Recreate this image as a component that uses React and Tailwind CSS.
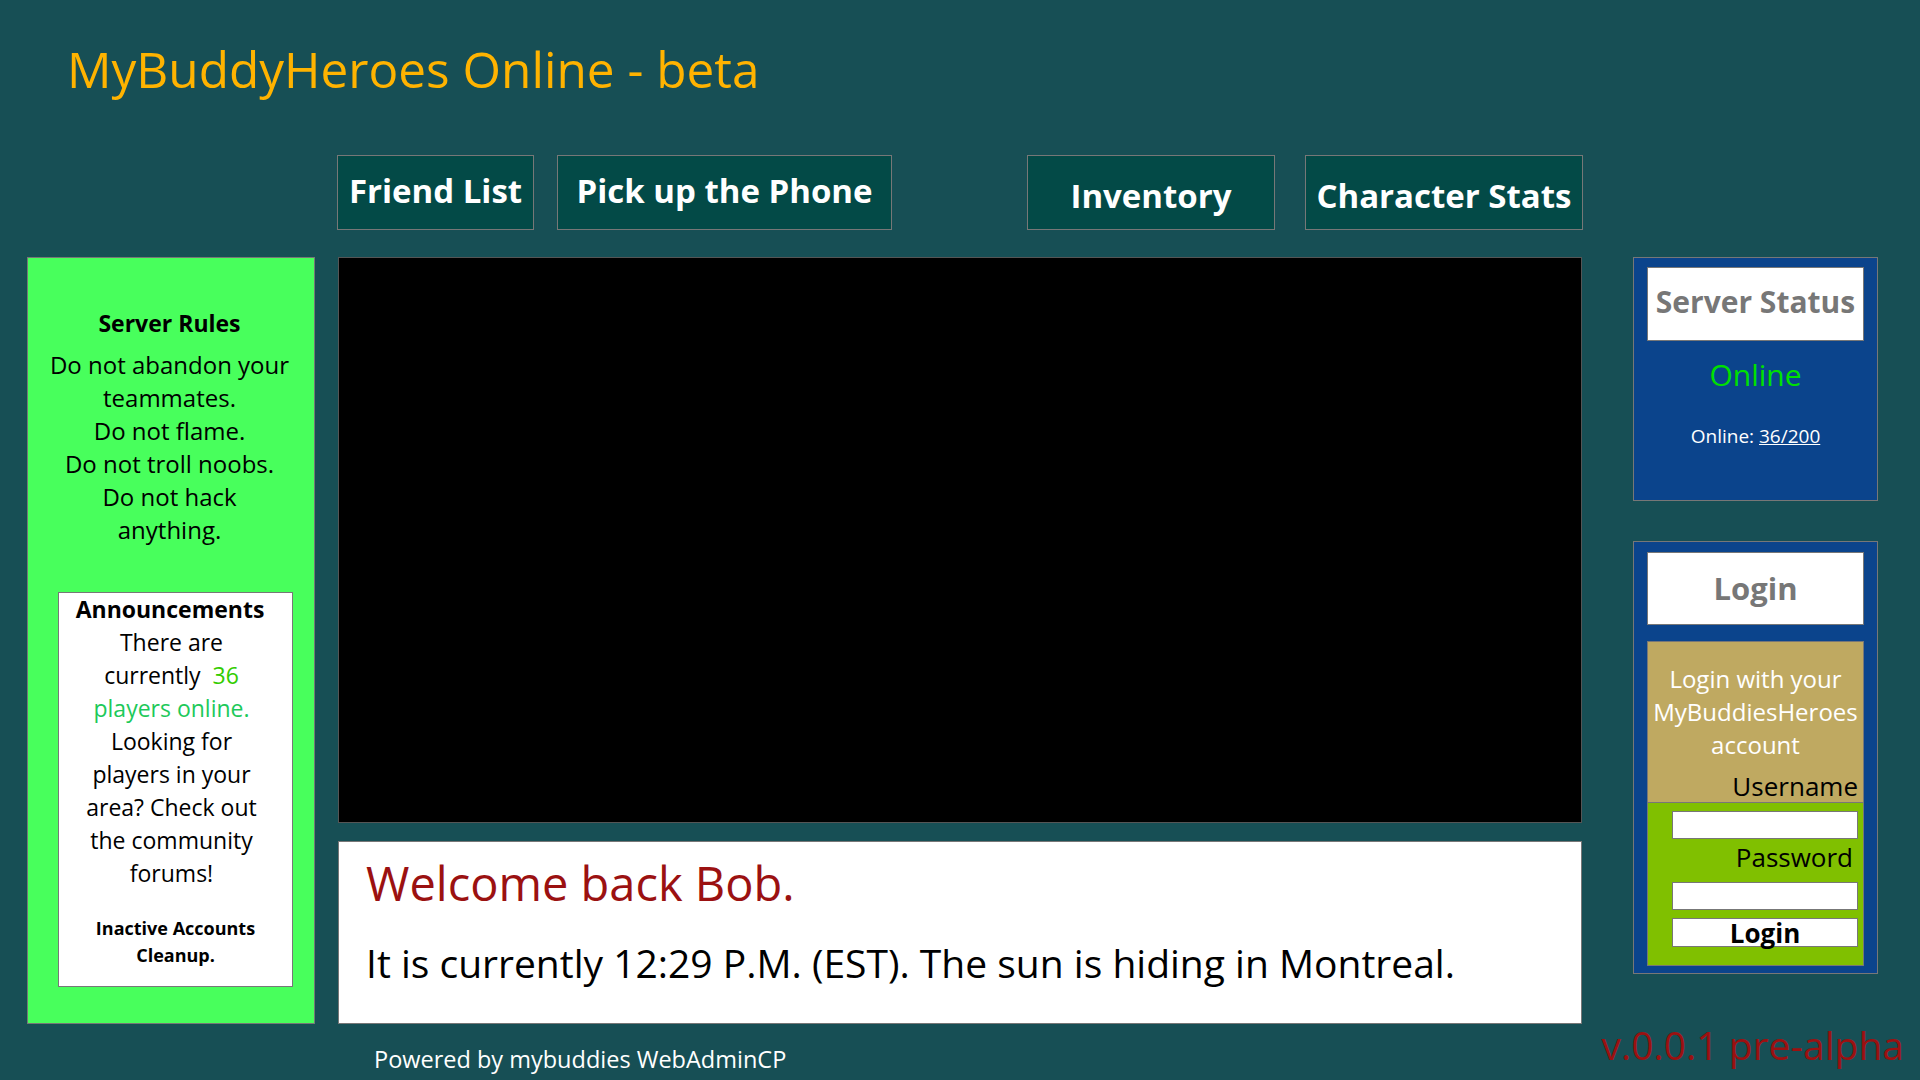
import React from "react";

const navBtn =
  "flex items-center justify-center h-[75px] bg-[#034a47] border border-[#777777] text-white font-bold text-[33px] leading-[33px]";

export default function App() {
  return (
    <div className="w-[1920px] h-[1080px] overflow-hidden bg-[#174f55] font-['Open_Sans',sans-serif] flex flex-col">
      {/* Header */}
      <div className="h-[155px] pl-[67px] pt-[44px]">
        <h1 className="text-[49.5px] leading-[50px] text-[#ffb300] font-normal">
          MyBuddyHeroes Online - beta
        </h1>
      </div>

      {/* Nav row */}
      <div className="flex h-[75px]">
        <div className="w-[337px]" />
        <div className="w-[1246px] flex justify-between">
          <div className="flex gap-[23px]">
            <div className={navBtn + " w-[197px] pb-[5px]"}>Friend List</div>
            <div className={navBtn + " w-[335px] pb-[5px]"}>Pick up the Phone</div>
          </div>
          <div className="flex gap-[30px]">
            <div className={navBtn + " w-[248px] pt-[5px]"}>Inventory</div>
            <div className={navBtn + " w-[278px] pt-[5px] text-[32.5px]"}>Character Stats</div>
          </div>
        </div>
      </div>

      {/* Main row */}
      <div className="flex mt-[27px] h-[767px]">
        {/* Left column */}
        <div className="ml-[27px] w-[288px] h-[767px] bg-[#48ff5c] border border-[#777777] flex flex-col text-black text-center">
          <div className="pt-[49px] pr-[3px] text-[23px] leading-[33px] font-bold">Server Rules</div>
          <div className="mt-[8px] pr-[3px] text-[24px] leading-[33px]">
            Do not abandon your
            <br />
            teammates.
            <br />
            Do not flame.
            <br />
            Do not troll noobs.
            <br />
            Do not hack
            <br />
            anything.
          </div>
          <div className="mt-[46px] ml-[30px] w-[235px] h-[395px] bg-white border border-[#777777] flex flex-col">
            <div className="text-[23px] leading-[33px] font-bold pr-[11px]">Announcements</div>
            <div className="text-[23px] leading-[33px] pr-[8px]">
              There are
              <br />
              currently&nbsp; <span className="text-[#33cc00]">36</span>
              <br />
              <span className="text-[#1dc95a]">players online.</span>
              <br />
              Looking for
              <br />
              players in your
              <br />
              area? Check out
              <br />
              the community
              <br />
              forums!
            </div>
            <div className="mt-[25px] text-[18px] leading-[27px] font-bold">
              Inactive Accounts
              <br />
              Cleanup.
            </div>
          </div>
        </div>

        {/* Middle column */}
        <div className="ml-[23px] w-[1244px] flex flex-col">
          <div className="h-[566px] bg-black border border-[#555555]" />
          <div className="mt-[18px] h-[183px] bg-white border border-[#777777] pl-[27px] pt-[18px]">
            <div className="text-[47px] leading-[47px] text-[#9b1111]">Welcome back Bob.</div>
            <div className="mt-[36px] text-[39px] leading-[39px] text-black">
              It is currently 12:29 P.M. (EST). The sun is hiding in Montreal.
            </div>
          </div>
        </div>

        {/* Right column */}
        <div className="ml-[51px] w-[245px] flex flex-col">
          <div className="h-[244px] bg-[#0b448c] border border-[#777777] flex flex-col items-center">
            <div className="mt-[9px] w-[217px] h-[74px] bg-white border border-[#777777] flex items-center justify-center pb-[4px] text-[#777777] font-bold text-[30px] leading-[30px] whitespace-nowrap">
              Server Status
            </div>
            <div className="mt-[19px] text-[30px] leading-[30px] text-[#00e000]">Online</div>
            <div className="mt-[37px] text-[19px] leading-[19px] text-white">
              Online: <span className="underline">36/200</span>
            </div>
          </div>

          <div className="mt-[40px] h-[433px] bg-[#0b448c] border border-[#777777] flex flex-col items-center">
            <div className="mt-[10px] w-[217px] h-[73px] bg-white border border-[#777777] flex items-center justify-center text-[#777777] font-bold text-[31px] leading-[31px]">
              Login
            </div>
            <div className="mt-[16px] w-[217px] border border-[#777777] flex flex-col">
              <div className="h-[160px] bg-[#bfa961] flex flex-col">
                <div className="pt-[20px] text-center text-white text-[24px] leading-[33px] whitespace-nowrap">
                  Login with your
                  <br />
                  MyBuddiesHeroes
                  <br />
                  account
                </div>
                <div className="mt-[12px] text-right pr-[5px] text-black text-[26px] leading-[26px]">
                  Username
                </div>
              </div>
              <div className="h-[163px] bg-[#80c000] border-t border-[#777777] flex flex-col items-end pr-[5px]">
                <div className="mt-[8px] w-[186px] h-[28px] bg-white border border-[#777777]" />
                <div className="mt-[5px] pr-[5px] text-black text-[26px] leading-[26px]">Password</div>
                <div className="mt-[12px] w-[186px] h-[28px] bg-white border border-[#777777]" />
                <div className="mt-[8px] w-[186px] h-[29px] bg-white border border-[#777777] flex items-center justify-center text-black font-bold text-[26px] leading-[26px]">
                  Login
                </div>
              </div>
            </div>
          </div>
        </div>
      </div>

      {/* Footer */}
      <div className="flex justify-between items-start">
        <div className="ml-[374px] mt-[23px] text-white text-[23.5px] leading-[24px]">
          Powered by mybuddies WebAdminCP
        </div>
        <div className="mr-[16px] mt-[1px] text-[#9b1111] text-[39px] leading-[39px]">
          v.0.0.1 pre-alpha
        </div>
      </div>
    </div>
  );
}
